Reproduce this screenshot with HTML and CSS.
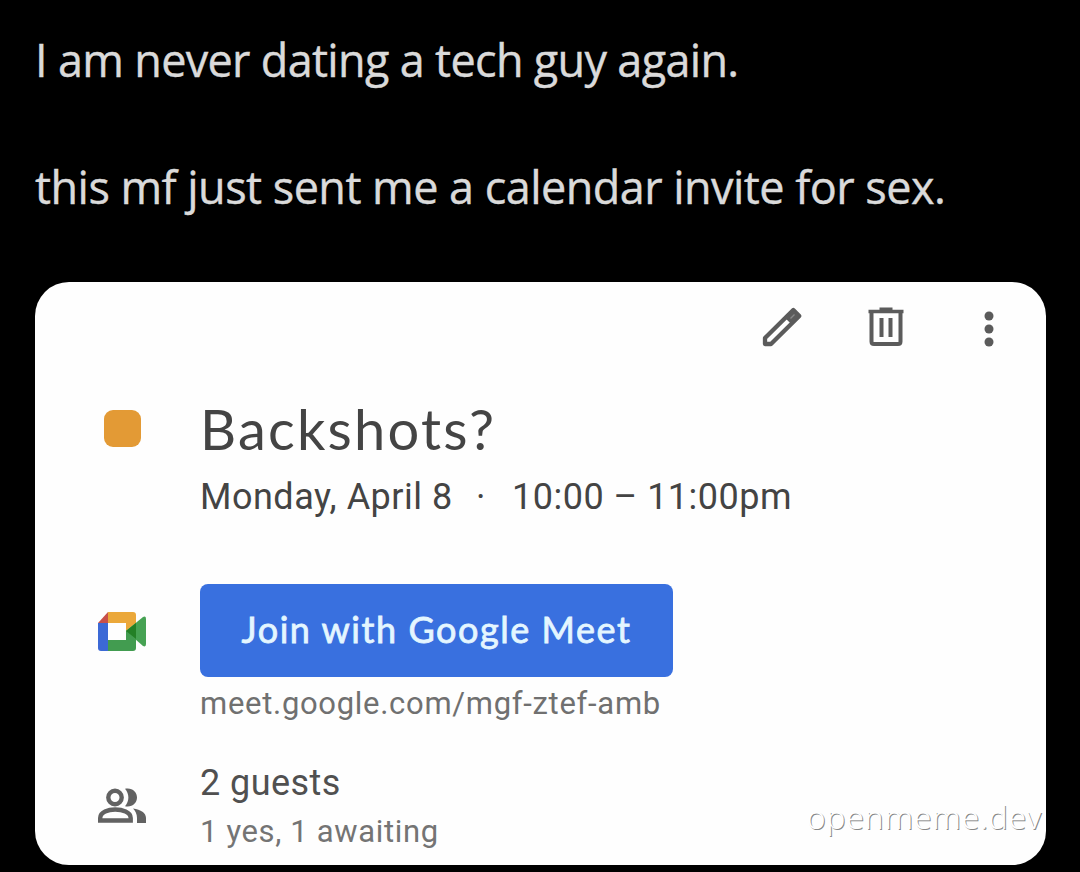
FILE: index.html
```html
<!DOCTYPE html>
<html lang="en">
<head>
<meta charset="utf-8">
<title>Calendar invite</title>
<link rel="stylesheet" href="styles.css">
</head>
<body>
<main class="post">
  <p class="line line-one">I am never dating a tech guy again.</p>
  <p class="line line-two">this mf just sent me a calendar invite for sex.</p>
  <section class="card">
    <header class="toolbar">
      <svg class="tool" viewBox="0 0 42 42"><path d="M4 32v6h6L38.300 10 32.300 4z" fill="none" stroke="#5b5b5b" stroke-width="4.300" stroke-linejoin="round"/><path d="M24 12l8.300-8 6 6-8 8z" fill="#5b5b5b"/><path d="M29.500 12.500l4-4" stroke="#888" stroke-width="1.300"/></svg>
      <svg class="tool" viewBox="0 0 42 42"><path d="M6.500 5v30.500q0 2.500 2.500 2.500h24q2.500 0 2.500-2.500V5" fill="none" stroke="#5b5b5b" stroke-width="4"/><path d="M3.500 5.500h35" stroke="#5b5b5b" stroke-width="3.700"/><path d="M14.500 3h13" stroke="#5b5b5b" stroke-width="3"/><path d="M16.500 12v19M25.500 12v19" stroke="#5b5b5b" stroke-width="4"/></svg>
      <svg class="tool" viewBox="0 0 42 42" fill="#5b5b5b"><circle cx="20" cy="10" r="4.500"/><circle cx="20" cy="23" r="4.500"/><circle cx="20" cy="36" r="4.500"/></svg>
    </header>
    <div class="row event">
      <span class="swatch"></span>
      <div>
        <h1 class="title">Backshots?</h1>
        <p class="when"><span class="day">Monday, April 8</span><span class="dot">·</span><span class="time">10:00 – 11:00pm</span></p>
      </div>
    </div>
    <div class="row meet">
      <svg class="logo" viewBox="0 0 48 40"><path d="M0 12h10v28H3q-3 0-3-3z" fill="#3c69d6"/><path d="M0 12L10 1v11z" fill="#c8504a"/><path d="M10 1h25q3 0 3 3v8l-10 8v-8H10z" fill="#eba83a"/><path d="M10 29h18v-9l10-8v25q0 3-3 3H10z" fill="#429c50"/><path d="M28 20l17-14q3-1.500 3 2v25q0 3.500-3 2z" fill="#46a253"/><path d="M28 20l10-8v16z" fill="#238026"/></svg>
      <div>
        <a class="join"><span class="join-label">Join with Google Meet</span></a>
        <p class="url">meet.google.com/mgf-ztef-amb</p>
      </div>
    </div>
    <div class="row guests">
      <svg class="people" viewBox="0 0 48 36"><circle cx="17" cy="9.500" r="6.700" fill="none" stroke="#626262" stroke-width="4.400"/><path d="M2.200 32.500v-2.500c0-6 8-8.500 15-8.500s15.500 2.500 15.500 8.500v2.500z" fill="none" stroke="#626262" stroke-width="4.400"/><path d="M27 .8c7-1.500 12 3 12 8.700s-5 10.200-12 8.700c4.500-5 4.500-12.400 0-17.400zM35 20.500c8 1 13 4.500 13 9.500v5H39v-5c0-4-1.500-7-4-9.500z" fill="#626262"/></svg>
      <div>
        <p class="count">2 guests</p>
        <p class="status">1 yes, 1 awaiting</p>
      </div>
    </div>
    <span class="watermark">openmeme.dev</span>
  </section>
</main>
</body>
</html>
```
FILE: styles.css
```css
* { box-sizing: border-box; margin: 0; }
body { background: #000; font-family: Roboto, sans-serif; }
.post { height: 872px; padding: 28px 35px 0; overflow: hidden; }
.line { height: 127px; line-height: 64px; font-family: "Open Sans", sans-serif; font-size: 45px; color: #dadada; white-space: nowrap; -webkit-text-stroke: 0.4px #dadada; }
.line-one { letter-spacing: -0.68px; }
.line-two { letter-spacing: -0.54px; }
.card { position: relative; width: 1011px; height: 583px; padding-top: 20px; border-radius: 34px; background: #fefefe; color: #444; white-space: nowrap; }
.toolbar { display: flex; justify-content: flex-end; gap: 62px; height: 98px; padding-right: 35px; }
.tool { width: 42px; height: 42px; margin-top: 4px; }
.row { display: grid; grid-template-columns: 102px 1fr; padding-left: 63px; }
.event { height: 184px; }
.swatch { width: 37px; height: 37px; margin: 10px 0 0 6px; border-radius: 9px; background: #e39a35; }
.title { height: 66px; line-height: 58px; font-family: Lato, sans-serif; font-size: 56px; font-weight: 400; letter-spacing: 2.2px; }
.when { display: flex; line-height: 62px; font-size: 36px; letter-spacing: 0.5px; }
.day { width: 276px; }
.dot { width: 36px; }
.meet { height: 180px; }
.logo { width: 48px; height: 40px; margin-top: 27px; }
.join { display: flex; align-items: center; justify-content: center; width: 473px; height: 93px; border-radius: 8px; background: #3970df; color: #e4f6ff; }
.join-label { margin-top: -4px; font-family: Lato, sans-serif; font-size: 36px; font-weight: 400; letter-spacing: 1.55px; -webkit-text-stroke: 0.8px #e4f6ff; }
.url { line-height: 53px; font-size: 31px; letter-spacing: 0.7px; color: #707070; }
.people { width: 48px; height: 36px; margin-top: 24px; }
.count { height: 50px; line-height: 38px; font-size: 36px; letter-spacing: 0.45px; color: #505050; }
.status { line-height: 36px; font-size: 31px; letter-spacing: 0.65px; color: #747474; }
.watermark { position: absolute; right: 4px; bottom: 26px; font-family: "Noto Sans", sans-serif; font-size: 32px; line-height: 44px; font-weight: 300; letter-spacing: 0.75px; color: #fff; text-shadow: 1px 1px 0 #888; }
```
